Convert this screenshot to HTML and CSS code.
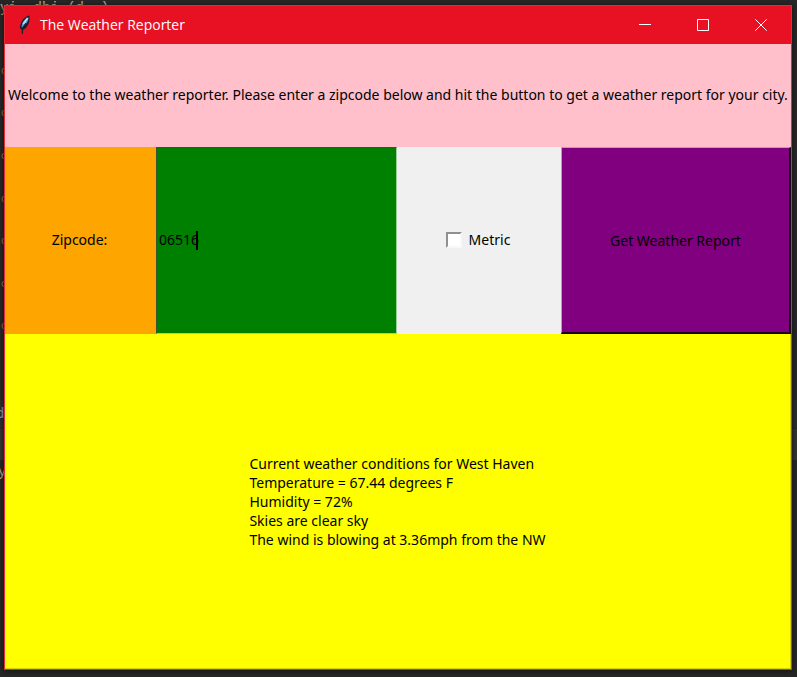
FILE: index.html
```html
<!DOCTYPE html>
<html lang="en">
<head>
<meta charset="utf-8">
<title>The Weather Reporter</title>
<link rel="stylesheet" href="styles.css">
</head>
<body>
<div class="backdrop" aria-hidden="true">
  <span class="band band-a"></span>
  <span class="band band-b"></span>
  <span class="code code-top">yi  dbi (d  )</span>
  <span class="code code-mark mark-1">c</span>
  <span class="code code-mark mark-2">c</span>
  <span class="code code-mark mark-3">c</span>
  <span class="code code-mark mark-4">c</span>
  <span class="code code-mark mark-5">c</span>
  <span class="code code-mark mark-6">c</span>
  <span class="code code-mark mark-7">c</span>
  <span class="code code-d">d</span>
  <span class="code code-y">y</span>
</div>
<main class="window">
  <header class="titlebar">
    <svg class="feather" viewBox="0 0 16 22" aria-hidden="true">
      <path d="M13 0C8 1 3 6 2 14l3 3c6-3 9-9 8-17z" fill="#1c1d2b"/>
      <path d="M12 2C7 4 4 9 4 14c4-2 8-7 8-12z" fill="#5b9ada"/>
      <path d="M11 3L6 10" stroke="#b9dcf5" stroke-width="2"/>
      <path d="M9 9L5 15v6" fill="none" stroke="#1c1d2b" stroke-width="1.500"/>
    </svg>
    <h1 class="title">The Weather Reporter</h1>
    <div class="controls">
      <button class="control" type="button" aria-label="Minimize"><svg viewBox="0 0 12 12"><path d="M0 5.500h12"/></svg></button>
      <button class="control" type="button" aria-label="Maximize"><svg viewBox="0 0 12 12"><path d="M.5.5h11v11H.5z"/></svg></button>
      <button class="control" type="button" aria-label="Close"><svg viewBox="0 0 12 12"><path d="M.3.3l11.400 11.400M11.700.3L.3 11.700"/></svg></button>
    </div>
  </header>
  <p class="welcome">Welcome to the weather reporter. Please enter a zipcode below and hit the button to get a weather report for your city.</p>
  <form class="form">
    <label class="zip-label" for="zip">Zipcode:</label>
    <div class="zip-field"><input class="zip" id="zip" type="text" value="06516"><span class="caret"></span></div>
    <label class="metric"><input class="check" type="checkbox">Metric</label>
    <button class="report-button" type="button">Get Weather Report</button>
  </form>
  <section class="report">
    <p class="report-text">Current weather conditions for West Haven<br>Temperature = 67.44 degrees F<br>Humidity = 72%<br>Skies are clear sky<br>The wind is blowing at 3.36mph from the NW</p>
  </section>
</main>
</body>
</html>
```
FILE: styles.css
```css
* { box-sizing: border-box; }
body {
  margin: 0;
  min-height: 100vh;
  padding: 5px 5px 7px 4px;
  display: flex;
  background: #272727;
  color: #000;
  font: 14px/19px "Noto Sans", "Open Sans", sans-serif;
}
.backdrop { position: absolute; inset: 0; overflow: hidden; }
.code { position: absolute; font: 14px/16px "Liberation Mono", monospace; color: #c9b08a; white-space: pre; }
.code-top { left: 0; top: 0; }
.code-mark { left: 1px; font-size: 10px; color: #a08050; }
.mark-1 { top: 64px; }
.mark-2 { top: 106px; }
.mark-3 { top: 149px; }
.mark-4 { top: 192px; }
.mark-5 { top: 234px; }
.mark-6 { top: 277px; }
.mark-7 { top: 319px; }
.code-d { left: -4px; top: 406px; color: #8ba6c8; }
.code-y { left: -2px; top: 464px; }
.band { position: absolute; left: 0; right: 0; }
.band-a { top: 400px; height: 28px; background: #2d2d2d; }
.band-b { top: 429px; height: 31px; background: #353535; }
.window {
  position: relative;
  flex: 1;
  display: flex;
  flex-direction: column;
  border: 1px solid #e52c36;
  box-shadow: 0 1px 5px #111;
}
.titlebar { display: flex; align-items: center; height: 38px; padding: 0 1px 0 13px; background: #e81123; color: #fff; }
.feather { width: 14px; height: 20px; margin-right: 8px; }
.title { flex: 1; margin: 0; font: 14px/20px "Open Sans", sans-serif; }
.controls { display: flex; align-self: stretch; }
.control { width: 58px; padding: 0; border: 0; background: none; display: grid; place-items: center; }
.control svg { width: 12px; height: 12px; fill: none; stroke: #fff; }
.welcome { flex: 101; margin: 0; padding-bottom: 2px; display: flex; align-items: center; justify-content: center; background: #ffc0cb; white-space: nowrap; }
.form { flex: 187; display: grid; grid-template-columns: 151fr 241fr 164fr 230fr; }
.zip-label, .metric { display: flex; align-items: center; justify-content: center; padding: 0 2px 2px 0; }
.zip-label { background: #ffa500; }
.zip-field { position: relative; display: flex; }
.zip { width: 100%; min-width: 0; padding: 0 2px 2px; border: 1px solid; border-color: #345434 #9bd09b #9bd09b #345434; border-radius: 0; background: #008000; color: #000; font: inherit; outline: 0; }
.caret { position: absolute; left: 40px; top: calc(50% - 10px); width: 2px; height: 19px; background: #000; }
.metric { background: #f0f0f0; gap: 7px; }
.check { appearance: none; width: 16px; height: 16px; margin: 0; background: #fff; border: 2px solid; border-color: #909090 #f8f8f8 #f8f8f8 #909090; }
.report-button { padding: 0; border: solid; border-width: 1px 2px 2px 1px; border-color: #d08fd0 #180018 #180018 #d08fd0; background: #800080; color: #000; font: inherit; }
.report { flex: 334; display: flex; align-items: center; justify-content: center; background: #ff0; border: solid #d8d000; border-width: 0 1px 1px 0; }
.report-text { margin: 0; }
```
